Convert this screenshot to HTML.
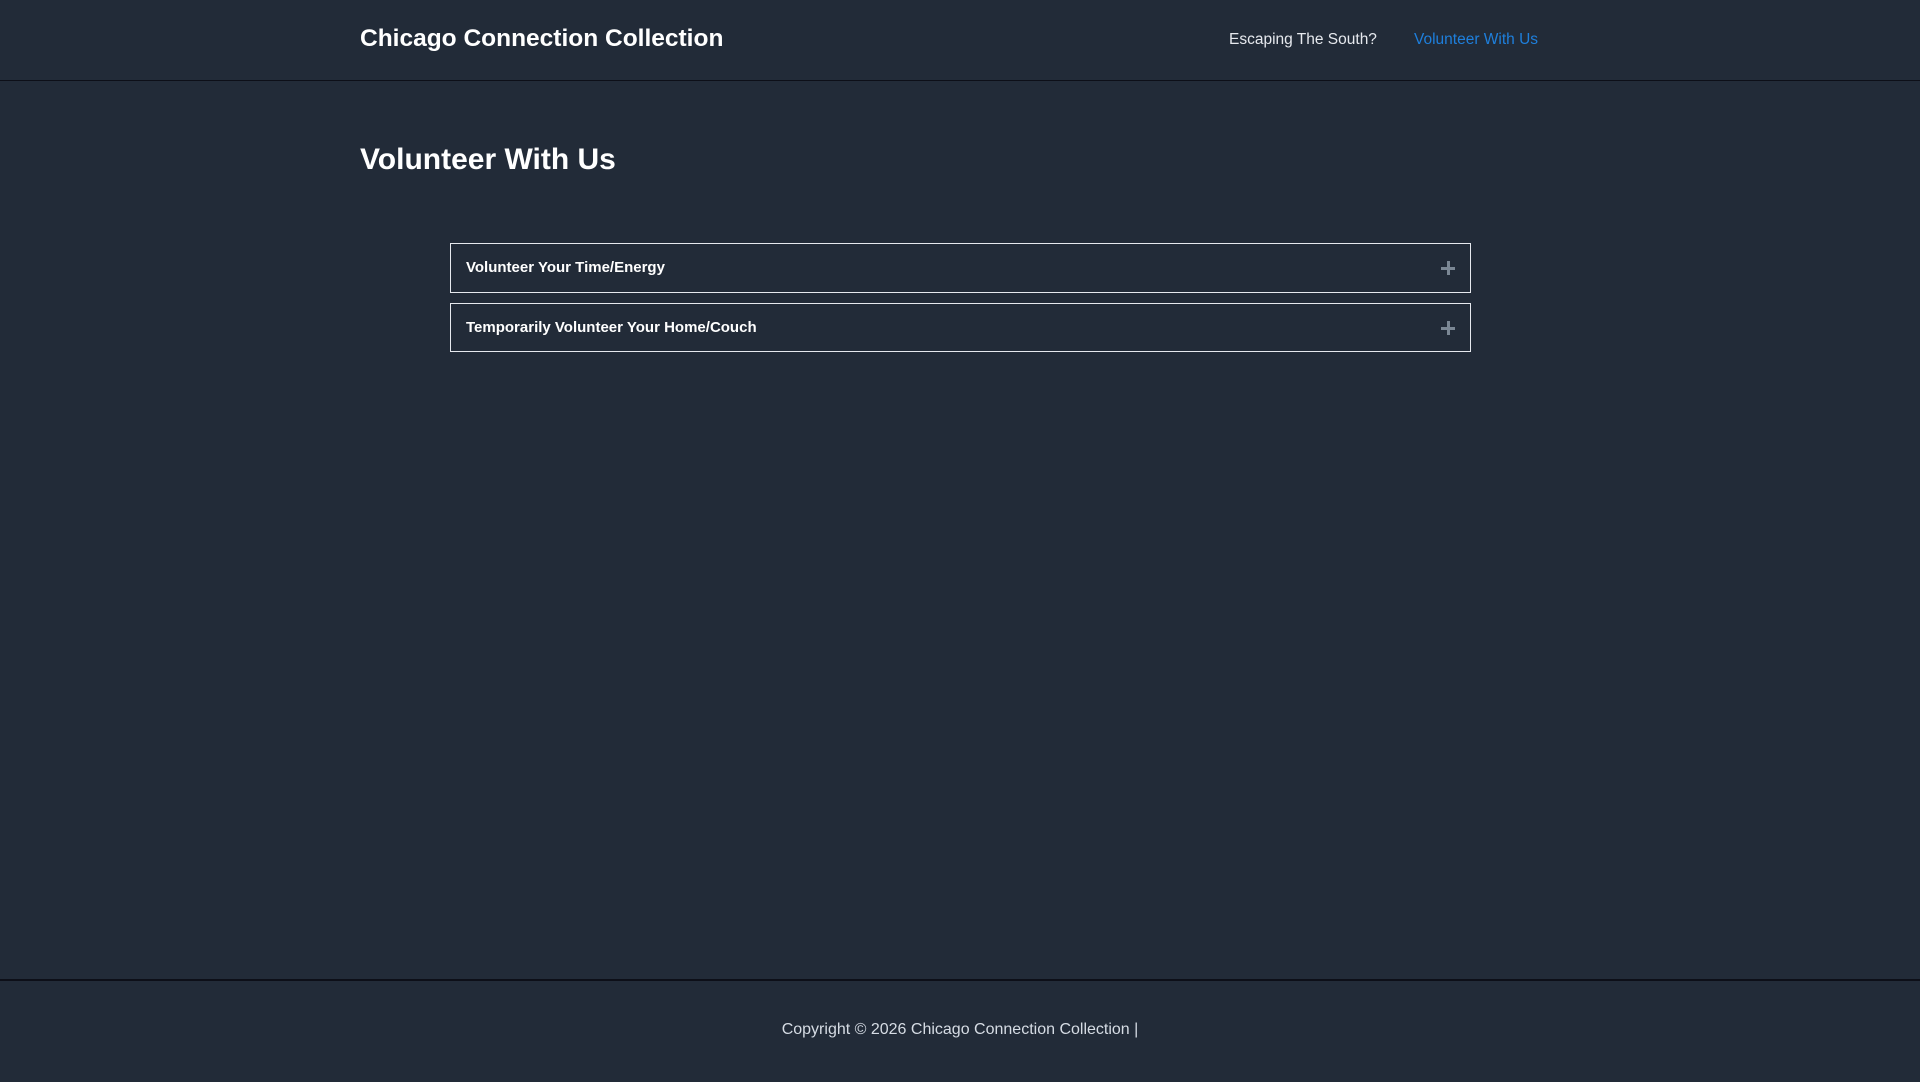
<!DOCTYPE html>
<html><head><meta charset="utf-8"><style>
html,body{margin:0;padding:0;}
body{width:1920px;height:1080px;background:#222b38;font-family:"Liberation Sans",Arial,sans-serif;color:#fff;position:relative;overflow:hidden;}
.hdr{position:absolute;left:0;top:0;width:1920px;height:80px;border-bottom:1px solid #0d0f18;}
.title{position:absolute;left:360px;top:25px;font-size:24.5px;font-weight:bold;white-space:nowrap;}
.nav{position:absolute;top:31px;font-size:15.5px;white-space:nowrap;}
h1{position:absolute;left:360px;top:143px;margin:0;font-size:30px;font-weight:bold;white-space:nowrap;}
.acc{position:absolute;left:450px;width:1019px;border:1px solid #e6e9ee;}
.acc span{position:absolute;left:15px;font-size:15px;font-weight:bold;white-space:nowrap;}
.plus{position:absolute;width:14px;height:14px;}
.plus:before{content:"";position:absolute;left:0;top:5.5px;width:14px;height:3px;background:#7b8794;}
.plus:after{content:"";position:absolute;left:5.5px;top:0;width:3px;height:14px;background:#7b8794;}
.ftr{position:absolute;left:0;top:979px;width:1920px;height:101px;border-top:2px solid #0d0f18;}
.copy{position:absolute;left:0;width:1920px;top:40px;text-align:center;font-size:16px;color:#d6dce4;}
</style></head><body>
<div class="hdr">
<div class="title">Chicago Connection Collection</div>
<div class="nav" style="left:1229px;color:#e6e9ee;">Escaping The South?</div>
<div class="nav" style="left:1414px;color:#1e7fdc;">Volunteer With Us</div>
</div>
<h1>Volunteer With Us</h1>
<div class="acc" style="top:243px;height:48px;"><span style="top:15px;">Volunteer Your Time/Energy</span><div class="plus" style="left:990px;top:17px;"></div></div>
<div class="acc" style="top:303px;height:47px;"><span style="top:15px;">Temporarily Volunteer Your Home/Couch</span><div class="plus" style="left:990px;top:17px;"></div></div>
<div class="ftr"><div class="copy">Copyright © 2026 Chicago Connection Collection |</div></div>
</body></html>
